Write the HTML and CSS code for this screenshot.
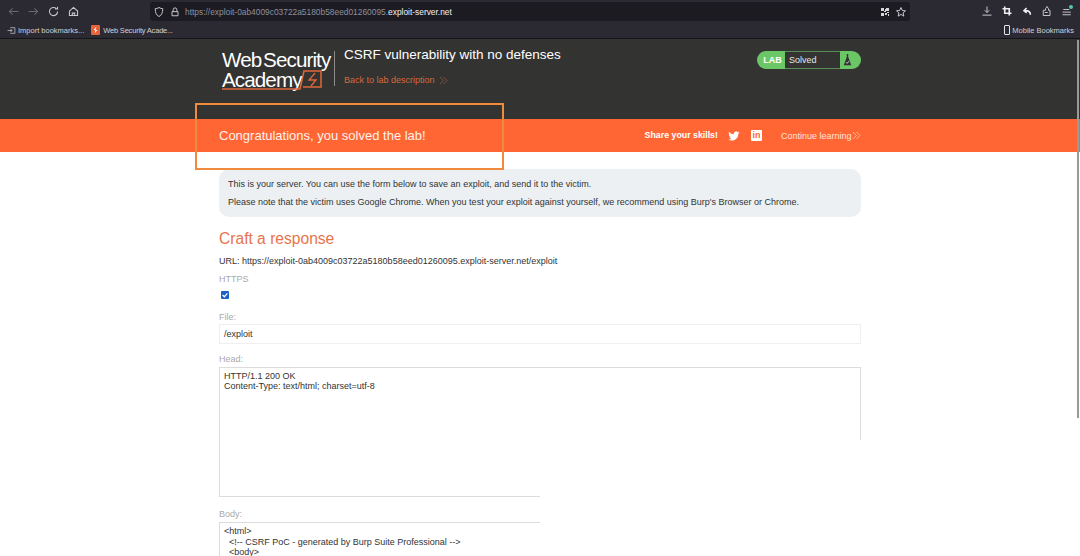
FILE: index.html
```html
<!DOCTYPE html>
<html lang="en">
<head>
<meta charset="utf-8">
<title>CSRF vulnerability with no defenses</title>
<link rel="stylesheet" href="styles.css">
</head>
<body>
<div class="browser">
  <div class="toolbar">
    <div class="nav">
      <svg class="ic dim" viewBox="0 0 16 16"><path d="M14 8H3M7 4 3 8l4 4"/></svg>
      <svg class="ic dim" viewBox="0 0 16 16"><path d="M2 8h11M9 4l4 4-4 4"/></svg>
      <svg class="ic" viewBox="0 0 16 16"><path d="M13 8a5 5 0 1 1-1.500-3.500M13 2v3h-3"/></svg>
      <svg class="ic" viewBox="0 0 16 16"><path d="M3 7.500 8 3l5 4.500V13H3zM6.500 13V10h3v3"/></svg>
    </div>
    <div class="urlbar">
      <svg class="ic url-ic" viewBox="0 0 16 16"><path d="M8 2c2 1.200 3.500 1.500 5 1.500C13 9 11.500 12.500 8 14 4.500 12.500 3 9 3 3.500 4.500 3.500 6 3.200 8 2z"/></svg>
      <svg class="ic url-ic" viewBox="0 0 16 16"><path d="M4 7.500h8V13H4zM5.500 7.500V5a2.500 2.500 0 0 1 5 0v2.500"/></svg>
      <span class="url"><span class="url-dim">https://exploit-0ab4009c03722a5180b58eed01260095.</span>exploit-server.net</span>
      <span class="spacer"></span>
      <svg class="qr" viewBox="0 0 8 8"><path d="M0 0h3v3H0zM5 0h3v3H5zM0 5h3v3H0zM4 1h1v2H4zM3 3h2v1H3zM6 4h2v1H6zM4 5h2v2H4zM7 6h1v2H7z"/></svg>
      <svg class="ic star" viewBox="0 0 16 16"><path d="m8 2 1.800 4 4.200.4-3.200 2.800 1 4.300L8 11.200 4.200 13.500l1-4.300L2 6.400 6.200 6z"/></svg>
    </div>
    <div class="tools">
      <svg class="ic" viewBox="0 0 16 16"><path d="M8 2v8M5 7l3 3 3-3M2 13.500h12"/></svg>
      <svg class="ic strong" viewBox="0 0 16 16"><path d="M5 2v9h9M2 5h9v9"/></svg>
      <svg class="ic strong" viewBox="0 0 16 16"><path d="M12.500 13c0-4-2-5.500-6.500-5.500M7.500 4 4 7.500l3.500 3"/></svg>
      <svg class="ic" viewBox="0 0 16 16"><path d="M3 7h3V5l2-3 2 3v2h2v7H3zM5 10h4"/></svg>
      <span class="menu-wrap">
        <svg class="ic" viewBox="0 0 16 16"><path d="M3 6h8M2 9.500h11M2 13h11"/></svg>
        <span class="menu-dot"></span>
      </span>
    </div>
  </div>
  <div class="bookmarks">
    <span class="bm"><svg class="ic bm-ic" viewBox="0 0 16 16"><path d="M6 3h8v10H6M1 8h8M6 5l3 3-3 3"/></svg>Import bookmarks...</span>
    <span class="bm bm-wsa"><span class="favicon"><svg viewBox="0 0 10 10"><path d="M6 1 3 5h2L4 9l3-4H5z"/></svg></span>Web Security Acade...</span>
    <span class="spacer"></span>
    <span class="bm"><span class="phone"></span>Mobile Bookmarks</span>
  </div>
</div>

<header class="lab-header">
  <div class="wrap header-row">
    <div class="logo">
      <span class="logo-line">Web Security</span>
      <span class="logo-line">Academy</span>
      <svg class="logo-mark" viewBox="0 0 115 46"><path d="M3 39h78l4-18h17v16H84"/><path class="bolt" d="M96 23l-6 7h7l-5 6"/></svg>
    </div>
    <div class="title-block">
      <h2 class="lab-title">CSRF vulnerability with no defenses</h2>
      <a class="back">Back to lab description <svg class="chev" viewBox="0 0 9 9"><path d="m1 1 3.500 3.500L1 8M4.500 1 8 4.500 4.500 8"/></svg></a>
    </div>
    <div class="status">
      <span class="status-lab">LAB</span>
      <span class="status-text">Solved</span>
      <span class="status-icon"><svg viewBox="0 0 12 16"><path d="M5 0h2v4l4 11H1L5 4z"/><path class="tick" d="m4 11 1.500 1.500L8 9.500"/></svg></span>
    </div>
  </div>
</header>

<section class="solved">
  <div class="wrap solved-row">
    <h4 class="congrats">Congratulations, you solved the lab!</h4>
    <span class="spacer"></span>
    <span class="share">Share your skills!</span>
    <svg class="twitter" viewBox="0 0 24 24"><path d="M23 5c-.8.400-1.700.600-2.600.700.900-.6 1.600-1.400 2-2.500-.9.500-1.800.900-2.900 1.100A4.600 4.600 0 0 0 11.600 8.500C7.800 8.300 4.400 6.500 2.100 3.700c-1.200 2.100-.6 4.800 1.400 6.100-.7 0-1.400-.2-2-.6 0 2.200 1.500 4.100 3.700 4.600-.7.200-1.400.2-2.100.1.600 1.900 2.300 3.200 4.300 3.200A9.300 9.300 0 0 1 .6 19a13 13 0 0 0 20-11.600C21.600 6.800 22.400 6 23 5z"/></svg>
    <span class="linkedin">in</span>
    <a class="continue">Continue learning <svg class="chev" viewBox="0 0 9 9"><path d="m1 1 3.500 3.500L1 8M4.500 1 8 4.500 4.500 8"/></svg></a>
  </div>
</section>

<div class="highlight"></div>

<main class="wrap content">
  <div class="intro">
    <p>This is your server. You can use the form below to save an exploit, and send it to the victim.</p>
    <p>Please note that the victim uses Google Chrome. When you test your exploit against yourself, we recommend using Burp's Browser or Chrome.</p>
  </div>
  <h3 class="craft">Craft a response</h3>
  <p class="url-line">URL: https://exploit-0ab4009c03722a5180b58eed01260095.exploit-server.net/exploit</p>
  <label class="field-label">HTTPS</label>
  <span class="check"><svg viewBox="0 0 10 10"><path d="m2 5 2.200 2.200L8 3"/></svg></span>
  <label class="field-label file-label">File:</label>
  <div class="input">/exploit</div>
  <label class="field-label head-label">Head:</label>
  <div class="textarea head">HTTP/1.1 200 OK<br>Content-Type: text/html; charset=utf-8</div>
  <label class="field-label body-label">Body:</label>
  <div class="textarea body-area">&lt;html&gt;<br>&nbsp;&nbsp;&lt;!-- CSRF PoC - generated by Burp Suite Professional --&gt;<br>&nbsp;&nbsp;&lt;body&gt;</div>
  <div class="paint-gap"></div>
</main>
<div class="scrollbar"></div>
</body>
</html>
```
FILE: styles.css
```css
* { box-sizing: border-box; }
html, body { margin: 0; height: 556px; overflow: hidden; }
body { background: #fff; font-family: "Liberation Sans", Arial, sans-serif; position: relative; color: #333; }
p, h2, h3, h4 { margin: 0; font-weight: 400; }
.spacer { flex: 1; }

.browser { height: 39px; background: #2b2a33; border-bottom: 1px solid #15141a; }
.toolbar { height: 22px; display: flex; align-items: center; padding: 0 0 0 7px; }
.nav { display: flex; gap: 7px; width: 143px; }
.nav .ic { width: 13px; height: 13px; }
.ic { fill: none; stroke: #c9c9cf; stroke-width: 1.300; width: 14px; height: 14px; flex: none; }
.ic.dim { stroke: #696970; }
.ic.strong { stroke: #ededf0; stroke-width: 2.200; }
.urlbar { width: 760px; height: 19px; background: #1c1b22; border-radius: 3px; display: flex; align-items: center; padding: 0 3px 0 3px; margin-top: 1px; }
.url-ic { width: 12px; height: 12px; margin-right: 4px; }
.url { font-size: 8.400px; color: #f2f2f4; white-space: nowrap; }
.url-dim { color: #8f8f9d; }
.qr { width: 8px; height: 8px; fill: #d5d5da; margin-right: 6px; }
.star { width: 12px; height: 12px; }
.tools { display: flex; gap: 8px; margin-left: 71px; align-items: center; }
.tools .ic { width: 12px; height: 12px; margin-right: 0; }
.menu-wrap { position: relative; display: flex; }
.menu-dot { position: absolute; top: 0; right: 0; width: 4px; height: 4px; border-radius: 50%; background: #54c6b0; }
.bookmarks { height: 16px; display: flex; align-items: center; gap: 5px; padding: 0 6px 0 7px; font-size: 7.500px; color: #d0d0d5; }
.bm { display: flex; align-items: center; gap: 2px; white-space: nowrap; }
.bm-wsa { gap: 3px; letter-spacing: -0.200px; }
.bm-ic { width: 9px; height: 9px; }
.favicon { width: 9px; height: 10px; background: #e8633a; display: flex; border-radius: 1px; margin-left: 2px; }
.favicon svg { width: 9px; height: 10px; fill: #fff; }
.phone { width: 6px; height: 10px; border: 1px solid #e4e4e8; border-radius: 1px; }

.wrap { width: 642px; margin-left: 219px; }
.lab-header { height: 80px; background: #333332; }
.header-row { display: flex; align-items: flex-start; height: 80px; }
.logo { width: 115px; height: 46px; margin-top: 11px; padding-left: 3px; position: relative; color: #fff; font-size: 20.600px; line-height: 19.500px; letter-spacing: -0.900px; word-spacing: -3px; }
.logo-line { display: block; white-space: nowrap; }
.logo-mark { position: absolute; left: 0; top: 0; width: 115px; height: 46px; fill: none; stroke: #e0683c; stroke-width: 1.500; }
.logo-mark .bolt { stroke-width: 1.300; }
.title-block { border-left: 1px solid #8b8b8b; height: 35px; margin-top: 12px; padding-left: 9px; flex: none; }
.lab-title { color: #fff; font-size: 13.500px; line-height: 12px; margin-top: -2px; white-space: nowrap; }
.back { display: flex; align-items: center; gap: 1px; color: #d9673a; font-size: 9px; margin-top: 14px; white-space: pre; }
.chev { width: 9px; height: 9px; fill: none; stroke-width: 0.800; margin-left: 1px; }
.back .chev { stroke: #8f5a43; }
.status { margin-left: auto; margin-top: 12px; width: 104px; height: 18px; border-radius: 9px; background: #6bc765; display: flex; align-items: stretch; overflow: hidden; font-size: 9px; flex: none; }
.status-lab { width: 28px; color: #fff; font-weight: 700; display: flex; align-items: center; justify-content: center; padding-left: 3px; }
.status-text { width: 55px; background: #333332; color: #e8e8e8; display: flex; align-items: center; padding-left: 4px; border: 1px solid #5b8a57; border-width: 1px 0; }
.status-icon { flex: 1; display: flex; align-items: center; padding-left: 3px; }
.status-icon svg { width: 9px; height: 12px; fill: #333332; }
.tick { fill: none; stroke: #fff; stroke-width: 1; }

.solved { height: 33px; background: #ff6633; }
.solved-row { display: flex; align-items: center; height: 33px; color: #fff; }
.congrats { font-size: 13px; color: #fff1ec; }
.share { font-size: 8.800px; font-weight: 700; margin-top: -2px; }
.twitter { width: 12px; height: 12px; fill: #fff; margin-left: 10px; }
.linkedin { width: 11px; height: 11px; background: #fff; color: #ff6633; font-size: 9px; font-weight: 700; line-height: 11px; text-align: center; border-radius: 1px; margin-left: 11px; }
.continue { display: flex; align-items: center; white-space: pre; font-size: 9px; margin-left: 19px; color: #ffe3d8; }
.continue .chev { stroke: #ffc7b0; margin-left: -2px; }

.highlight { position: absolute; left: 195px; top: 103px; width: 309px; height: 67px; border: 2px solid #f08a3c; }

.content { font-size: 9px; }
.intro { margin-top: 17px; height: 48px; background: #ecf0f3; border-radius: 10px; padding: 10px 9px 0; color: #333; line-height: 10px; }
.intro p + p { margin-top: 8px; }
.craft { color: #e8744a; font-size: 15.600px; line-height: 18px; margin-top: 13px; }
.url-line { margin-top: 8px; line-height: 10px; color: #333; }
.field-label { display: block; color: #aaa; line-height: 10px; margin-top: 8px; }
.check { display: block; width: 8px; height: 8px; margin: 7px 0 0 2px; background: #1c62c8; border-radius: 1px; }
.check svg { display: block; width: 8px; height: 8px; fill: none; stroke: #fff; stroke-width: 1.500; }
.file-label { margin-top: 13px; }
.input { height: 20px; margin-top: 2px; border: 1px solid #efefef; padding: 3px 4px; line-height: 12px; color: #333; }
.head-label { margin-top: 10px; }
.textarea { border: 1px solid #dcdcdc; padding: 3px 4px; line-height: 10px; color: #333; }
.head { height: 130px; margin-top: 3px; }
.body-label { margin-top: 12px; }
.body-area { height: 60px; margin-top: 3px; line-height: 10.500px; }
.paint-gap { position: absolute; left: 540px; top: 440px; width: 330px; height: 116px; background: #fff; }
.scrollbar { position: absolute; right: 1px; top: 40px; width: 2px; height: 378px; background: #9a9a9a; }
```
